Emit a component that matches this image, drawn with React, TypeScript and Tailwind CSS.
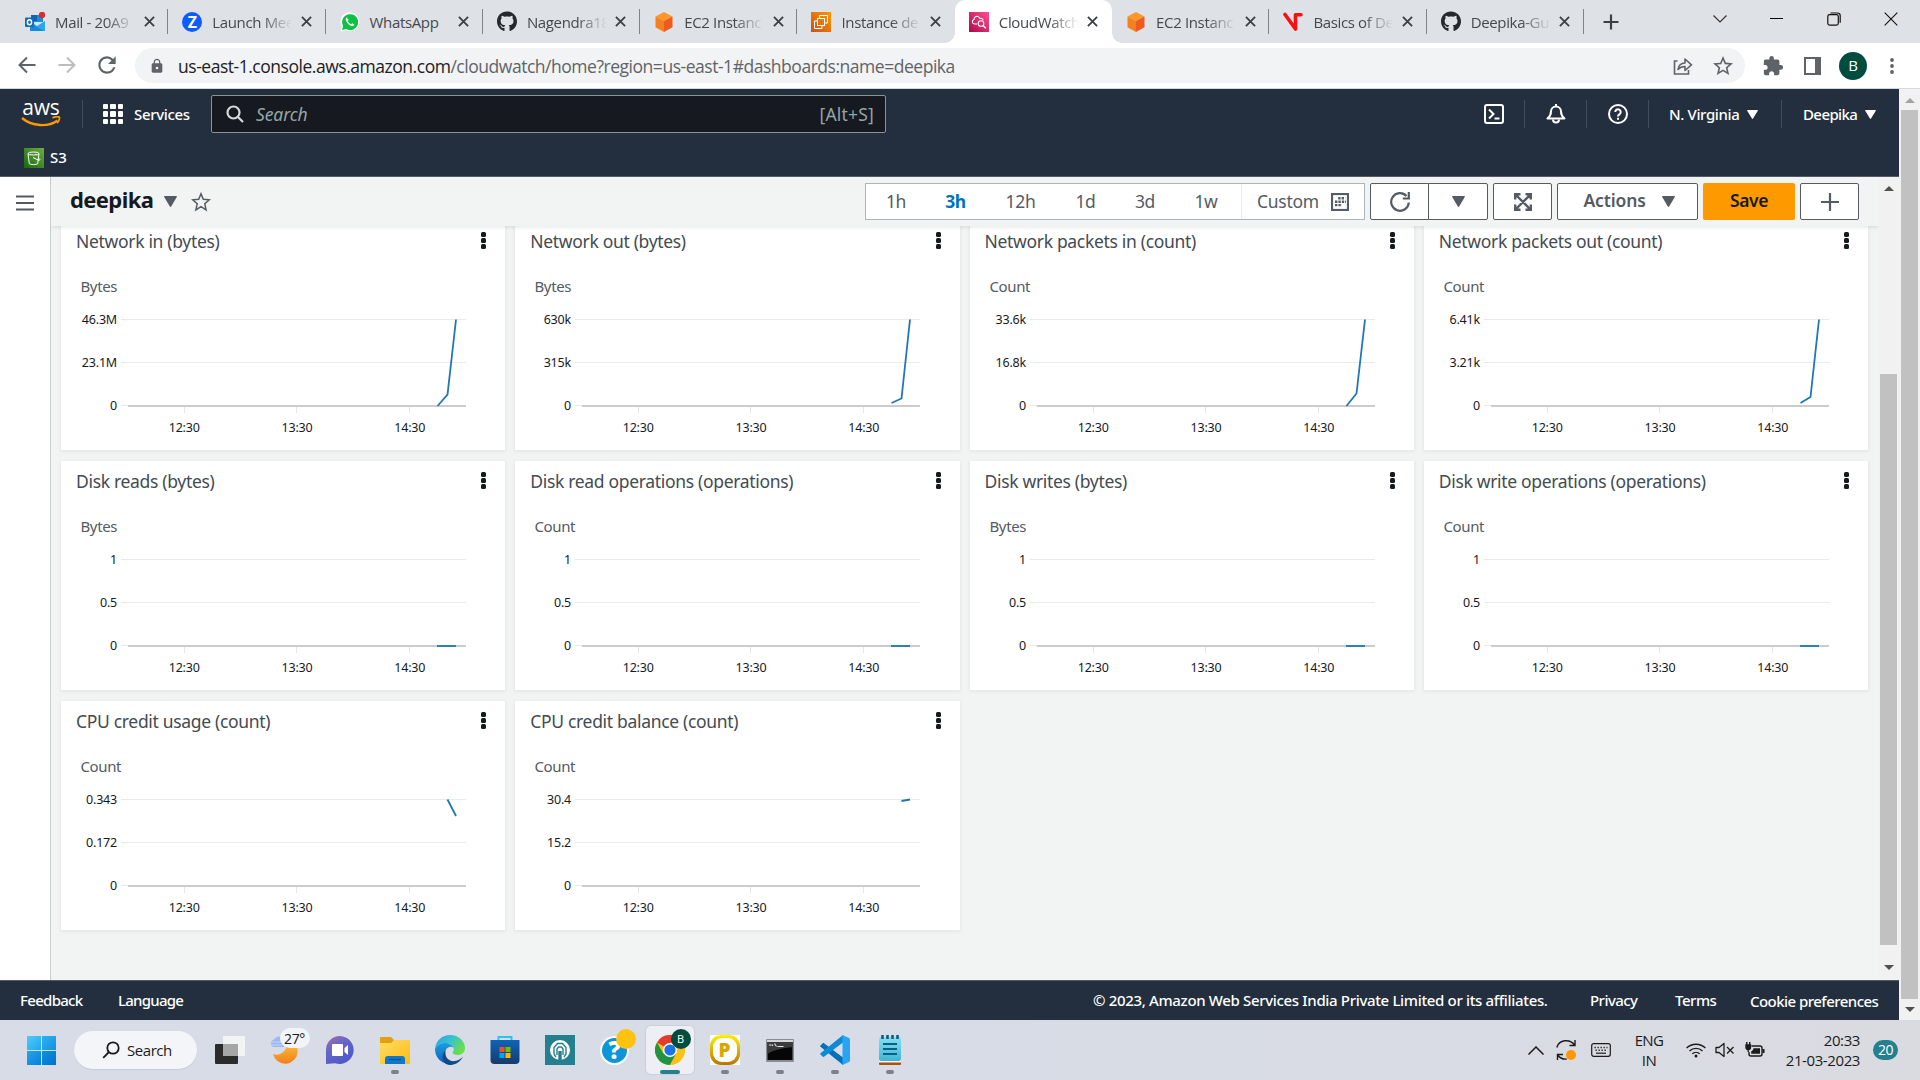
import React, { ReactNode } from "react";
import { FaGithub } from "react-icons/fa";
import { MdExtension, MdLock, MdRefresh, MdStarOutline } from "react-icons/md";

/* ---------- favicons ---------- */

const OutlookIcon = () => (
  <svg viewBox="0 0 20 20" className="size-5">
    <path d="M6 3h12v7H6z" fill="#1490df" />
    <path d="M6 3h6v6H6z" fill="#0f64b4" />
    <path d="M5 9l7 5 8-5v10H5z" fill="#28a8ea" />
    <path d="M5 11l14 8H6a1 1 0 0 1-1-1z" fill="#1a8ad8" />
    <rect x="0" y="5.5" width="9" height="9.5" rx="1" fill="#0f6cbd" />
    <ellipse cx="4.5" cy="10.2" rx="2.1" ry="2.5" fill="none" stroke="#fff" strokeWidth="1.4" />
    <circle cx="17" cy="3" r="3.2" fill="#e02b2b" />
  </svg>
);

const ZoomIcon = () => (
  <span className="flex size-5 items-center justify-center rounded-full bg-[#0b5cff] text-[16px] leading-none font-bold text-white">
    Z
  </span>
);

const WhatsAppIcon = () => (
  <svg viewBox="0 0 20 20" className="size-5">
    <path d="M0.5 19.5l1.4-5A9.4 9.4 0 1 1 5.6 18z" fill="#fff" />
    <path d="M2 18l1.1-4A8 8 0 1 1 6 17z" fill="#0dc143" />
    <path
      d="M6.8 5.5c-.9.3-1.3 1.3-1 2.5.7 2.8 3.2 5.3 6 6 1.2.3 2.3-.4 2.6-1.4l-2.2-1.3-1.1 1c-1.5-.6-2.7-1.8-3.3-3.3l.9-1.1z"
      fill="#fff"
    />
  </svg>
);

const Ec2CubeIcon = () => (
  <svg viewBox="0 0 20 20" className="size-5">
    <path d="M10 0l8.5 4.5L10 9 1.5 4.5z" fill="#fd9827" />
    <path d="M1.5 4.5L10 9v11l-8.5-4.7z" fill="#f58020" />
    <path d="M18.5 4.5L10 9v11l8.5-4.7z" fill="#ee5b1d" />
  </svg>
);

const Ec2SquareIcon = () => (
  <svg viewBox="0 0 20 20" className="size-5">
    <defs>
      <linearGradient id="ec2sq" x1="0" y1="1" x2="1" y2="0">
        <stop offset="0" stopColor="#c8511b" />
        <stop offset="1" stopColor="#f90" />
      </linearGradient>
    </defs>
    <rect width="20" height="20" fill="url(#ec2sq)" />
    <g fill="none" stroke="#fff" strokeWidth="1">
      <path d="M8.500 6V3.500h8V11H14" />
      <rect x="6.500" y="6.500" width="7" height="7" />
      <path d="M6 9H3.500v7.500H11V14" />
    </g>
  </svg>
);

const CloudWatchIcon = () => (
  <svg viewBox="0 0 20 20" className="size-5">
    <defs>
      <linearGradient id="cw" x1="0" y1="1" x2="1" y2="0">
        <stop offset="0" stopColor="#b0084d" />
        <stop offset="1" stopColor="#ff4f8b" />
      </linearGradient>
    </defs>
    <rect width="20" height="20" fill="url(#cw)" />
    <g fill="none" stroke="#fff" strokeWidth="1.1">
      <path d="M8 12H5.500a2.300 2.300 0 0 1-.5-4.500C5 5 7 4 8.800 4.500c1.200.3 1.800 1.200 2.200 2 1.700-.6 3 .3 3 1.700" />
      <circle cx="12" cy="11.500" r="2.800" />
      <path d="M14 13.500l2.800 2.800" strokeWidth="1.5" />
    </g>
  </svg>
);

const VIcon = () => (
  <svg viewBox="0 0 20 20" className="size-5">
    <path d="M2 2.500L12.500 17V2.800H18" fill="none" stroke="#fa0f0f" strokeWidth="3.600" strokeLinecap="round" strokeLinejoin="round" />
  </svg>
);

const GithubIcon = () => <FaGithub className="size-[21px] text-[#24292f]" />;

/* ---------- browser chrome ---------- */

type Tab = { title: string; icon: ReactNode; fade?: boolean; active?: boolean; line?: boolean };

const tabs: Tab[] = [
  { title: "Mail - 20A9", icon: <OutlookIcon />, fade: true, line: true },
  { title: "Launch Mee", icon: <ZoomIcon />, fade: true, line: true },
  { title: "WhatsApp", icon: <WhatsAppIcon />, line: true },
  { title: "Nagendra18", icon: <GithubIcon />, fade: true, line: true },
  { title: "EC2 Instanc", icon: <Ec2CubeIcon />, fade: true, line: true },
  { title: "Instance de", icon: <Ec2SquareIcon />, fade: true },
  { title: "CloudWatch", icon: <CloudWatchIcon />, fade: true, active: true },
  { title: "EC2 Instanc", icon: <Ec2CubeIcon />, fade: true, line: true },
  { title: "Basics of De", icon: <VIcon />, fade: true, line: true },
  { title: "Deepika-Gu", icon: <GithubIcon />, fade: true, line: true },
];

const TabItem = ({ title, icon, fade, active, line }: Tab) => (
  <div className={"relative flex h-[43px] w-[157.3px] shrink-0 items-center pr-[13px] pl-[14px] " + (active ? "rounded-t-[10px] bg-white" : "")}>
    {active && (
      <>
        <span className="absolute bottom-0 -left-[10px] size-[10px] bg-[radial-gradient(circle_at_0_0,transparent_9.5px,white_10px)]" />
        <span className="absolute -right-[10px] bottom-0 size-[10px] bg-[radial-gradient(circle_at_100%_0,transparent_9.5px,white_10px)]" />
      </>
    )}
    <span className="flex w-5 shrink-0 justify-center">{icon}</span>
    <span
      className={
        "ml-[10px] w-[88px] shrink-0 text-[15px] leading-5 tracking-[-0.35px] whitespace-nowrap text-[#45494d] " +
        (fade ? "[mask-image:linear-gradient(to_right,black_50px,transparent_80px)]" : "")
      }
    >
      {title}
    </span>
    <svg viewBox="0 0 12 12" className="ml-[0.5px] size-[11px] shrink-0">
      <path d="M1 1l10 10M11 1L1 11" stroke="#3c4043" strokeWidth="2" />
    </svg>
    {line && <span className="absolute top-[9px] right-0 h-[25px] w-px bg-[#808387]" />}
  </div>
);

const TabStrip = () => (
  <div className="flex h-[43px] bg-[#dee1e6] pr-px pl-[11px]">
    {tabs.map((t, i) => (
      <TabItem key={i} {...t} />
    ))}
    <div className="ml-[19px] flex w-4 items-center">
      <svg viewBox="0 0 16 16" className="size-4">
        <path d="M8 .5v15M.5 8h15" stroke="#3c4043" strokeWidth="2.2" />
      </svg>
    </div>
    <div className="ml-auto flex h-[37px] items-center">
      <div className="flex w-[57px] justify-center">
        <svg viewBox="0 0 14 8" className="h-2 w-[14px]">
          <path d="M.5.5L7 7 13.500.5" fill="none" stroke="#333" strokeWidth="1.2" />
        </svg>
      </div>
      <div className="flex w-[57px] justify-center">
        <span className="h-px w-[13px] bg-black" />
      </div>
      <div className="flex w-[57px] justify-center">
        <svg viewBox="0 0 14 14" className="size-[14px]" fill="none" stroke="#111" strokeWidth="1.2">
          <rect x=".8" y="2.600" width="10.500" height="10.500" rx="1.800" />
          <path d="M3.500 1h7A2.700 2.700 0 0 1 13.200 3.700v7" />
        </svg>
      </div>
      <div className="flex w-[57px] justify-center">
        <svg viewBox="0 0 14 14" className="size-[14px]">
          <path d="M.7.7l12.600 12.600M13.300.7L.7 13.300" stroke="#111" strokeWidth="1.1" />
        </svg>
      </div>
    </div>
  </div>
);

const AddressBar = () => (
  <div className="flex h-[46px] items-center border-b border-[#d5d8dc] bg-white">
    <div className="flex w-[135px] items-center pb-[2px] pl-[18px]">
      <svg viewBox="0 0 18 18" className="size-[18px]" fill="none" stroke="#5f6368" strokeWidth="2">
        <path d="M17.500 9H2M9 1.500L1.500 9 9 16.500" />
      </svg>
      <svg viewBox="0 0 18 18" className="ml-[22px] size-[18px]" fill="none" stroke="#bcbec1" strokeWidth="2">
        <path d="M.5 9H16M9 1.500L16.500 9 9 16.500" />
      </svg>
      <MdRefresh className="ml-[18px] size-[26px] text-[#5f6368]" />
    </div>
    <div className="flex h-[35px] w-[1610px] items-center rounded-full bg-[#f1f3f4] pr-[10px]">
      <MdLock className="ml-[14px] size-[16px] text-[#5f6368]" />
      <div className="ml-[13px] text-[17.5px] leading-6 tracking-[-0.47px] whitespace-nowrap text-[#5f6368]">
        <span className="text-[#202124]">us-east-1.console.aws.amazon.com</span>
        /cloudwatch/home?region=us-east-1#dashboards:name=deepika
      </div>
      <svg viewBox="0 0 20 20" className="ml-auto size-5" fill="none" stroke="#5f6368" strokeWidth="1.6">
        <path d="M4.500 5H1.500v13h14v-4" />
        <path d="M5 13.500c.5-4 3-6.300 7-6.500V3l6.500 5.800-6.500 5.700v-4c-3 0-5.300.9-7 3z" strokeLinejoin="round" />
      </svg>
      <MdStarOutline className="ml-[18px] size-6 text-[#5f6368]" />
    </div>
    <MdExtension className="ml-[17px] size-[22px] text-[#5f6368]" />
    <div className="ml-[20px] h-[18px] w-[17px] border-2 border-r-[6px] border-[#5f6368]" />
    <div className="ml-[18px] flex size-7 items-center justify-center rounded-full bg-[#004d40] text-[15px] text-white">B</div>
    <svg viewBox="0 0 4 16" className="ml-[23px] h-4 w-1" fill="#5f6368">
      <circle cx="2" cy="2" r="1.900" />
      <circle cx="2" cy="8" r="1.900" />
      <circle cx="2" cy="14" r="1.900" />
    </svg>
  </div>
);

/* ---------- AWS navigation ---------- */

const NavLine = () => <span className="block h-7 w-px bg-[#414d5c]" />;

const Caret = ({ className }: { className: string }) => (
  <svg viewBox="0 0 12 10" preserveAspectRatio="none" className={className} fill="currentColor">
    <path d="M.6 0h10.800c.5 0 .7.500.4.900L6.600 9.500c-.3.600-.9.600-1.200 0L.2.900C-.1.500.1 0 .6 0z" />
  </svg>
);

const AwsNav = () => (
  <header className="h-[88px] border-b border-[#545b64] bg-[#232f3e] font-['Noto_Sans',sans-serif] text-white">
    <div className="flex h-[50px] items-center">
      <div className="mr-[21px] ml-[21px] flex w-10 flex-col items-center">
        <span className="-mt-[4px] font-['Open_Sans',sans-serif] text-[21px] leading-[19px] font-medium tracking-[-0.2px]">aws</span>
        <svg viewBox="0 0 40 11" className="-mt-px h-[11px] w-10" fill="none" stroke="#f90">
          <path d="M1 2c10 8.500 26 9.500 35.500 2.500" strokeWidth="2.4" />
          <path d="M31.500 1.800c3-1.300 6-1.300 6.800-.6.500 1.200-.5 4-2.300 6" strokeWidth="1.8" />
        </svg>
      </div>
      <NavLine />
      <div className="ml-[20px] grid size-5 grid-cols-3 gap-[2px]">
        {Array.from({ length: 9 }, (_, i) => (
          <span key={i} className="rounded-[1px] bg-white" />
        ))}
      </div>
      <span className="ml-[11px] w-[77px] text-[15px] leading-5 font-medium tracking-[-0.34px]">Services</span>
      <div className="flex h-[38px] w-[675px] items-center rounded-[2px] border border-[#879596] bg-[#16191f] pr-[11px] pl-[14px]">
        <svg viewBox="0 0 18 18" className="size-[18px]" fill="none" stroke="#d5dbdb" strokeWidth="2.2">
          <circle cx="7.500" cy="7.500" r="6" />
          <path d="M12 12l5 5" />
        </svg>
        <span className="ml-[12px] text-[17.5px] leading-6 tracking-[-0.1px] text-[#95a5a6] italic">Search</span>
        <span className="ml-auto text-[17.5px] leading-6 tracking-[0.2px] text-[#95a5a6]">[Alt+S]</span>
      </div>
      <div className="ml-auto flex items-center">
        <svg viewBox="0 0 20 20" className="mr-[20px] size-5" fill="none" stroke="#fff" strokeWidth="2">
          <rect x="1" y="1" width="18" height="18" rx="2" />
          <path d="M5 5.500L9.500 10 5 14.500M10.500 14.500h5" />
        </svg>
        <NavLine />
        <svg viewBox="0 0 20 20" className="mr-[20px] ml-[21px] size-5" fill="none" stroke="#fff" strokeWidth="2">
          <path d="M1.500 14.500c2.500-2 3.500-4 3.500-7a5 5 0 0 1 10 0c0 3 1 5 3.500 7z" strokeLinejoin="round" />
          <path d="M7 15.500a3 3 0 0 0 6 0M10 0v2.500" />
        </svg>
        <NavLine />
        <svg viewBox="0 0 20 20" className="mr-[20px] ml-[21px] size-5" fill="none" stroke="#fff" strokeWidth="2">
          <circle cx="10" cy="10" r="9" />
          <path d="M7.300 8a2.700 2.700 0 1 1 4.300 2.200c-1 .7-1.600 1-1.600 2.300M10 13.800v2" />
        </svg>
        <span className="flex h-7 w-[133px] items-center border-l border-[#414d5c] pl-[20px] text-[15px] font-medium tracking-[-0.36px]">
          <span className="w-[71px] whitespace-nowrap">N. Virginia</span>
          <Caret className="ml-[7px] h-[9px] w-[11px]" />
        </span>
        <span className="flex h-7 w-[118px] items-center border-l border-[#414d5c] pl-[21px] text-[15px] font-medium tracking-[-0.6px]">
          <span className="w-[55px] whitespace-nowrap">Deepika</span>
          <Caret className="ml-[7px] h-[9px] w-[11px]" />
        </span>
      </div>
    </div>
    <div className="flex h-[37px] items-center pl-[24px]">
      <svg viewBox="0 0 20 20" className="size-5">
        <defs>
          <linearGradient id="s3" x1="0" y1="1" x2="1" y2="0">
            <stop offset="0" stopColor="#1b660f" />
            <stop offset="1" stopColor="#6cae3e" />
          </linearGradient>
        </defs>
        <rect width="20" height="20" fill="url(#s3)" />
        <g fill="none" stroke="#fff" strokeWidth="1">
          <ellipse cx="9.500" cy="5.500" rx="5.500" ry="1.500" />
          <path d="M4 5.500l1.300 10.200c1.500 1.200 7 1.200 8.400 0L15 5.500M9 9.500l5 2.500c2.500.8 2.500-.6.500-2" />
        </g>
      </svg>
      <span className="ml-[6px] text-[15px] font-medium">S3</span>
    </div>
  </header>
);

/* ---------- dashboard ---------- */

const ranges = [
  { label: "1h", width: "w-[60px]" },
  { label: "3h", width: "w-[59px]", selected: true },
  { label: "12h", width: "w-[71px]" },
  { label: "1d", width: "w-[59px]" },
  { label: "3d", width: "w-[60px]" },
  { label: "1w", width: "w-[66px] pr-[4px]" },
];

const btn = "flex h-[37px] items-center justify-center border border-[#545b64] bg-white text-[#545b64]";

const DashboardHeader = () => (
  <div className="relative z-10 flex h-[49px] items-center bg-[#f2f3f3] pr-[20px] pl-[19px] shadow-[0_1px_4px_rgba(0,28,36,0.12)]">
    <h1 className="w-[84px] pb-[5px] text-[22px] leading-7 font-bold tracking-[-0.6px] text-[#16191f]">deepika</h1>
    <Caret className="ml-[10px] h-[11px] w-[13px] text-[#545b64]" />
    <svg viewBox="0 0 20 20" className="ml-[14px] size-5" fill="none" stroke="#545b64" strokeWidth="1.5">
      <path d="M10 1.800l2.300 5.500 6 .5-4.500 4 1.300 6L10 14.600l-5.100 3.200 1.300-6-4.500-4 6-.5z" />
    </svg>
    <div className="ml-auto flex items-center">
      <div className="flex h-[37px] w-[500px] items-center border border-[#aab7b8] bg-white text-[17.5px] text-[#545b64]">
        {ranges.map((r) => (
          <span
            key={r.label}
            className={r.width + " text-center tracking-[-0.35px] " + (r.selected ? "font-bold text-[#0073bb]" : "")}
          >
            {r.label}
          </span>
        ))}
        <span className="flex h-[35px] items-center border-l border-[#eaeded] pl-[15px] tracking-[-0.28px]">
          <span className="w-[62px]">Custom</span>
          <svg viewBox="0 0 18 18" className="ml-[12px] size-[18px]">
            <rect x="1" y="1" width="16" height="16" fill="#fff" stroke="#545b64" strokeWidth="2.2" />
            <path d="M7.200 5.300h7M4 8.700h11M4 12.100h7" stroke="#545b64" strokeWidth="2.400" strokeDasharray="2.400 1" />
          </svg>
        </span>
      </div>
      <div className={btn + " ml-[5px] w-[59px] rounded-l-[2px]"}>
        <svg viewBox="0 0 20 20" className="size-5" fill="none" stroke="#545b64" strokeWidth="2.2">
          <path d="M18.800 10.500A8.800 8.800 0 1 1 16.500 4M18.800 0v6.500h-6" />
        </svg>
      </div>
      <div className={btn + " -ml-px w-[60px] rounded-r-[2px]"}>
        <Caret className="h-[11px] w-[13px]" />
      </div>
      <div className={btn + " ml-[5px] w-[59px] rounded-[2px]"}>
        <svg viewBox="0 0 18 18" className="size-[18px]" fill="none" stroke="#545b64" strokeWidth="2.4">
          <path d="M1.200 6.500V1.200H6.500M11.500 1.200h5.300V6.500M16.800 11.500v5.300H11.500M6.500 16.800H1.200V11.500M2 2l14 14M16 2L2 16" />
        </svg>
      </div>
      <div className={btn + " ml-[5px] w-[141px] rounded-[2px] text-[17.5px] font-semibold tracking-[-0.15px]"}>
        <span className="ml-[3px] w-[64px] pb-[2px]">Actions</span>
        <Caret className="ml-[14px] h-[11px] w-[13px]" />
      </div>
      <div className="ml-[5px] flex h-[37px] w-[92px] items-center justify-center rounded-[2px] bg-[#ff9900] pb-[2px] text-[17.5px] font-semibold tracking-[-0.4px] text-[#16191f]">
        Save
      </div>
      <div className={btn + " ml-[5px] w-[59px] rounded-[2px]"}>
        <svg viewBox="0 0 18 18" className="size-[18px]">
          <path d="M9 0v18M0 9h18" stroke="#545b64" strokeWidth="2.2" />
        </svg>
      </div>
    </div>
  </div>
);

type Metric = { title: string; unit: string; ticks: [string, string, string]; points: string };

const flat = "376,185 395,185";

const metrics: Metric[] = [
  { title: "Network in (bytes)", unit: "Bytes", ticks: ["46.3M", "23.1M", "0"], points: "376.5,185 386.5,173.5 395,98.5" },
  { title: "Network out (bytes)", unit: "Bytes", ticks: ["630k", "315k", "0"], points: "376.5,182 386.5,177.5 395,98.5" },
  { title: "Network packets in (count)", unit: "Count", ticks: ["33.6k", "16.8k", "0"], points: "376.5,185 386.5,172.5 395,98.5" },
  { title: "Network packets out (count)", unit: "Count", ticks: ["6.41k", "3.21k", "0"], points: "376.5,182 386.5,176 395,98.5" },
  { title: "Disk reads (bytes)", unit: "Bytes", ticks: ["1", "0.5", "0"], points: flat },
  { title: "Disk read operations (operations)", unit: "Count", ticks: ["1", "0.5", "0"], points: flat },
  { title: "Disk writes (bytes)", unit: "Bytes", ticks: ["1", "0.5", "0"], points: flat },
  { title: "Disk write operations (operations)", unit: "Count", ticks: ["1", "0.5", "0"], points: flat },
  { title: "CPU credit usage (count)", unit: "Count", ticks: ["0.343", "0.172", "0"], points: "386.5,98.5 395,115" },
  { title: "CPU credit balance (count)", unit: "Count", ticks: ["30.4", "15.2", "0"], points: "386.5,100 395,98.5" },
];

const Chart = ({ unit, ticks, points }: Metric) => (
  <svg viewBox="0 40 444 189" className="block h-[189px] w-[444px]">
    <text x="19.500" y="71" className="fill-[#545b64] text-[15px] tracking-[-0.38px]">{unit}</text>
    {ticks.map((t, i) => (
      <text key={i} x="56" y={103 + i * 43} textAnchor="end" className="fill-[#16191f] text-[12.5px] tracking-[-0.2px]">
        {t}
      </text>
    ))}
    <path d="M60 98.500h345M60 141.500h345M60 184.500h8" stroke="#eaeaea" />
    <path d="M123.500 186v6M235.500 186v6M348.500 186v6" stroke="#e4e6e6" />
    <path d="M67 185h338" stroke="#cccccc" strokeWidth="2" />
    {["12:30", "13:30", "14:30"].map((t, i) => (
      <text key={t} x={123.2 + i * 112.8} y="211" textAnchor="middle" className="fill-[#16191f] text-[12.5px] tracking-[-0.19px]">
        {t}
      </text>
    ))}
    <polyline points={points} fill="none" stroke="#1f77b4" strokeWidth="1.800" />
  </svg>
);

const MetricCard = (m: Metric) => (
  <section className="h-[229px] bg-white shadow-[0_1px_3px_1px_rgba(0,28,36,0.05)]">
    <div className="flex h-10 items-start justify-between pt-[8px] pr-[19px] pl-[15px]">
      <h2 className="text-[17.5px] leading-6 tracking-[-0.32px] text-[#444b52]">{m.title}</h2>
      <div className="mt-[3px] flex flex-col gap-[1px]">
        {[0, 1, 2].map((i) => (
          <span key={i} className="size-[5px] rounded-[1.5px] bg-[#16191f]" />
        ))}
      </div>
    </div>
    <Chart {...m} />
  </section>
);

const ScrollArrow = ({ up, className }: { up?: boolean; className: string }) => (
  <svg viewBox="0 0 10 5" className={"h-[5px] w-[10px] " + className} fill="currentColor">
    <path d={up ? "M5 0l5 5H0z" : "M0 0h10L5 5z"} />
  </svg>
);

const Workspace = () => (
  <div className="flex h-[803px] bg-[#f2f3f3] font-['Noto_Sans',sans-serif]">
    <aside className="w-[51px] border-r border-[#c5cccc] bg-white pt-[18px] pl-4">
      <svg viewBox="0 0 18 16" className="h-4 w-[18px]">
        <path d="M0 1.500h18M0 8h18M0 14.500h18" stroke="#545b64" strokeWidth="2" />
      </svg>
    </aside>
    <main className="flex w-[1828px] flex-col overflow-hidden">
      <DashboardHeader />
      <div className="flex-1 overflow-hidden">
        <div className="-mt-[5px] ml-[10px] grid w-[1807px] grid-cols-4 gap-x-[10px] gap-y-[11px]">
          {metrics.map((m) => (
            <MetricCard key={m.title} {...m} />
          ))}
        </div>
      </div>
    </main>
    <div className="flex w-5 flex-col items-center bg-[#f1f1f1] pr-px">
      <ScrollArrow up className="mt-[9px] text-[#505050]" />
      <div className="mt-[183px] h-[571px] w-[17px] bg-[#c1c1c1]" />
      <ScrollArrow className="mt-[20px] text-[#505050]" />
    </div>
  </div>
);

const Footer = () => (
  <footer className="flex h-10 items-center border-t border-[#545b64] bg-[#232f3e] pl-[20px] font-['Noto_Sans',sans-serif] text-[15px] font-medium whitespace-nowrap text-white">
    <span className="w-[98px] tracking-[-0.7px]">Feedback</span>
    <span className="tracking-[-0.75px]">Language</span>
    <span className="ml-auto w-[497px] tracking-[-0.34px]">© 2023, Amazon Web Services India Private Limited or its affiliates.</span>
    <span className="w-[85px] tracking-[-0.55px]">Privacy</span>
    <span className="w-[75px] tracking-[-0.48px]">Terms</span>
    <span className="w-[149px] pt-[2px] tracking-[-0.54px]">Cookie preferences</span>
  </footer>
);

/* ---------- taskbar ---------- */

const TaskSlot = ({ children, mark, active }: { children: ReactNode; mark?: boolean; active?: boolean }) => (
  <div className="flex h-[60px] w-[55px] items-center justify-center">
    <div
      className={
        "relative flex size-12 items-center justify-center rounded-[5px] " +
        (active ? "bg-[#edeff4] shadow-[0_0_1px_1px_rgba(0,0,0,0.06)]" : "")
      }
    >
      {children}
      {mark && <span className="absolute bottom-0 left-5 h-1 w-2 rounded-full bg-[#7d8087]" />}
      {active && <span className="absolute bottom-0 left-[14px] h-1 w-5 rounded-full bg-[#24808f]" />}
    </div>
  </div>
);

const TaskView = () => (
  <svg viewBox="0 0 30 30" className="size-[30px]">
    <rect x="0" y="9" width="23" height="20" rx="1" fill="#2b2b2b" />
    <rect x="8" y="1" width="22" height="20" rx="1" fill="#f3f3f3" fillOpacity=".95" />
    <rect x="8" y="9" width="15" height="12" fill="#a6a6a6" />
  </svg>
);

const Weather = () => (
  <>
    <svg viewBox="0 0 30 30" className="size-[30px]">
      <defs>
        <linearGradient id="moon" x1="0" y1="0" x2="0" y2="1">
          <stop offset="0" stopColor="#ffc83d" />
          <stop offset="1" stopColor="#f0801e" />
        </linearGradient>
      </defs>
      <path d="M18 4a12.500 12.500 0 1 1-15 15C10 22 19 15 18 4z" fill="url(#moon)" />
      <path d="M3 12a4 4 0 0 1 1-7.500A6 6 0 0 1 14 4v8z" fill="#9db9ee" />
      <path d="M1 7h10M0 10h12" stroke="#c5d6f7" strokeWidth="1.2" />
    </svg>
    <span className="absolute top-[2px] left-[19px] flex h-5 w-[30px] items-center justify-center rounded-full bg-[#f3f4f7] text-[14px] tracking-[-0.4px] text-[#1a1a1a]">
      27°
    </span>
  </>
);

const Chat = () => (
  <svg viewBox="0 0 30 30" className="size-[30px]">
    <defs>
      <linearGradient id="chat" x1="0" y1="0" x2=".6" y2="1">
        <stop offset="0" stopColor="#a06cb0" />
        <stop offset=".5" stopColor="#6264c7" />
        <stop offset="1" stopColor="#5059c9" />
      </linearGradient>
    </defs>
    <path d="M15 1a14 14 0 1 1-5 27.200L1 29V15A14 14 0 0 1 15 1z" fill="url(#chat)" />
    <rect x="7" y="9" width="11" height="12" rx="1" fill="#fff" />
    <path d="M19.500 13l3.500-3v10l-3.500-3z" fill="#fff" />
  </svg>
);

const Folder = () => (
  <svg viewBox="0 0 30 30" className="size-[30px]">
    <defs>
      <linearGradient id="folder" x1="0" y1="0" x2="1" y2="1">
        <stop offset="0" stopColor="#ffdc67" />
        <stop offset="1" stopColor="#fdbc12" />
      </linearGradient>
    </defs>
    <path d="M0 3a1 1 0 0 1 1-1h10l3 3h15v5H0z" fill="#e0a010" />
    <path d="M0 8h11l3-3h15a1 1 0 0 1 1 1v22a1 1 0 0 1-1 1H0z" fill="url(#folder)" />
    <path d="M5 29v-5a3 3 0 0 1 3-3h14a3 3 0 0 1 3 3v5z" fill="#0f78c8" />
    <path d="M9 24.500h12" stroke="#0a4f91" strokeWidth="1.2" />
  </svg>
);

const Edge = () => (
  <svg viewBox="0 0 30 30" className="size-[30px]">
    <defs>
      <linearGradient id="edgeTop" x1="0" y1="0" x2="1" y2=".5">
        <stop offset="0" stopColor="#2aa5dd" />
        <stop offset=".5" stopColor="#35c1d0" />
        <stop offset="1" stopColor="#6ade4d" />
      </linearGradient>
      <linearGradient id="edgeLow" x1="0" y1="0" x2="0" y2="1">
        <stop offset="0" stopColor="#1c9de0" />
        <stop offset="1" stopColor="#0c5fb8" />
      </linearGradient>
    </defs>
    <path d="M0 14C1 5 7.500 0 15 0c9 0 15 6.500 15 13 0 4.500-3.500 7-7.500 7-3 0-5-1-5-2.200 0-.8 1.300-1.300 1.300-3.600C18.800 11 15.500 8 10.500 8 5 8 1.500 10.500 0 14z" fill="url(#edgeTop)" />
    <path d="M0 14C1.500 10.500 5 8 10.500 8c4.500 0 7 2.500 7.800 4.500-3-2-8 0-8 5.500 0 6 5 10 11 9.800A15 15 0 0 1 0 15z" fill="url(#edgeLow)" />
    <path d="M10.500 15.500C9 22 14 27 20 26c3-.5 6-2 8-4.500C25 28 19 30 15 30c-5 0-8-5-7.500-9 .3-2.500 1.500-4.500 3-5.500z" fill="#114a8b" />
  </svg>
);

const Store = () => (
  <svg viewBox="0 0 30 30" className="size-[30px]">
    <defs>
      <linearGradient id="store" x1="0" y1="0" x2="0" y2="1">
        <stop offset="0" stopColor="#0c66b8" />
        <stop offset="1" stopColor="#173a6b" />
      </linearGradient>
    </defs>
    <path d="M8.500 6V2h13v4" fill="none" stroke="#2cc3f2" strokeWidth="2" />
    <path d="M.5 5h29v20a4 4 0 0 1-4 4h-21a4 4 0 0 1-4-4z" fill="url(#store)" />
    <path d="M9.500 12h5v5h-5z" fill="#f25022" />
    <path d="M15.500 12h5v5h-5z" fill="#7fba00" />
    <path d="M9.500 18h5v5h-5z" fill="#00a4ef" />
    <path d="M15.500 18h5v5h-5z" fill="#ffb900" />
  </svg>
);

const TealApp = () => (
  <svg viewBox="0 0 30 30" className="size-[30px]">
    <rect width="30" height="30" fill="#24808f" />
    <circle cx="15" cy="15" r="10" fill="#fff" />
    <path d="M9 19v-6.500l3.500-4h5l3.500 4V19l-2 3M9 19l2 3M12 20v-6l1.500-2h3l1.500 2v6" fill="none" stroke="#24808f" strokeWidth="1.400" />
    <path d="M13.300 16h3.400v9.500h-3.400z" fill="#24808f" />
  </svg>
);

const HelpApp = () => (
  <>
    <span className="flex size-[29px] items-center justify-center rounded-full border-2 border-white bg-[#0a96d8] text-[24px] leading-none font-extrabold text-white">
      ?
    </span>
    <span className="absolute top-[3px] right-[3px] size-5 rounded-full bg-[#ffc20e]" />
  </>
);

const Chrome = () => (
  <>
    <svg viewBox="0 0 30 30" className="size-[30px]">
      <circle cx="15" cy="15" r="15" fill="#fbc116" />
      <path d="M15 15L2 7.500A15 15 0 0 1 28 7.500H15z" fill="#e33b2e" />
      <path d="M2 7.500A15 15 0 0 0 15 30l6.500-11.300L15 15l-6.500 3.700z" fill="#229342" />
      <path d="M15 8.200h13.200A15 15 0 0 1 15 30l6.200-11.500z" fill="#fbc116" />
      <circle cx="15" cy="15" r="7" fill="#fff" />
      <circle cx="15" cy="15" r="5.600" fill="#1a73e8" />
    </svg>
    <span className="absolute top-[3px] right-[3px] flex size-5 items-center justify-center rounded-full bg-[#004d40] text-[11px] text-white">B</span>
  </>
);

const PApp = () => (
  <span className="flex size-[30px] items-center justify-center bg-white">
    <span className="flex size-[30px] items-center justify-center rounded-[11px] bg-linear-to-b from-[#fff200] to-[#b87400] p-[3px]">
      <span className="flex size-full items-center justify-center rounded-[9px] bg-white text-[19px] leading-none font-extrabold text-[#d9a800]">P</span>
    </span>
  </span>
);

const Terminal = () => (
  <svg viewBox="0 0 28 23" className="h-[23px] w-7">
    <rect width="28" height="23" rx="1" fill="#8a8d92" />
    <rect x="1" y="1" width="26" height="2" fill="#d5d7da" />
    <rect x="1.500" y="3" width="25" height="18" fill="#060606" />
    <path d="M1.500 3h25v5c-10 1-19 3-25 7z" fill="#3c3c3c" />
    <path d="M3 6h2.500M6.500 5.500v1.500M8.500 4.500l2 3M11.500 7.500h6" stroke="#e5e5e5" strokeWidth="1.1" />
  </svg>
);

const VsCode = () => (
  <svg viewBox="0 0 30 30" className="size-[30px]">
    <path d="M.5 10.500l2-2c.5-.5 1.300-.5 1.800-.1L23 22.500V30L.5 11.800a.9.9 0 0 1 0-1.300z" fill="#0070bb" />
    <path d="M.5 19.500l2 2c.5.5 1.300.5 1.800.1L23 7.500V0L.5 18.200a.9.9 0 0 0 0 1.300z" fill="#1089d5" />
    <path d="M22.500 0L29 3a2 2 0 0 1 1 1.700v20.600a2 2 0 0 1-1 1.700l-6.500 3z" fill="#27a5f3" />
  </svg>
);

const Notepad = () => (
  <svg viewBox="0 0 24 30" className="h-[30px] w-6">
    <defs>
      <linearGradient id="note" x1="0" y1="0" x2="0" y2="1">
        <stop offset="0" stopColor="#86e0f0" />
        <stop offset="1" stopColor="#41b4d4" />
      </linearGradient>
    </defs>
    <rect x="1" y="25" width="22" height="5" rx="1" fill="#b04e0f" />
    <rect x="1" y="24" width="22" height="3.500" fill="#f4f4f4" />
    <rect x="1" y="2" width="22" height="24" rx="2" fill="url(#note)" />
    <path d="M5 9h14M5 14h14M5 19h14" stroke="#0c5f84" strokeWidth="1.800" />
    <path d="M4.500 0v4M9.500 0v4M14.500 0v4M19.500 0v4" stroke="#0c5f84" strokeWidth="2.600" />
  </svg>
);

const Taskbar = () => (
  <div className="flex h-[60px] items-center bg-linear-to-r from-[#d8dce6] via-[#d7dce6] to-[#dadbe1] text-[#1b1b1b]">
    <div className="ml-[27px] grid size-[29px] grid-cols-2 gap-px">
      <span className="bg-linear-to-br from-[#4ccbfb] to-[#22a5ee]" />
      <span className="bg-linear-to-br from-[#2db2f3] to-[#1290df]" />
      <span className="bg-linear-to-br from-[#22a5ee] to-[#0a7fd6]" />
      <span className="bg-linear-to-br from-[#1290df] to-[#0072cf]" />
    </div>
    <div className="ml-[18px] flex h-[38px] w-[123px] items-center rounded-full bg-[#f4f5f8] pl-[28px] shadow-[0_1px_1px_rgba(0,0,0,0.08)]">
      <svg viewBox="0 0 18 18" className="size-[18px]" fill="none" stroke="#1b1b1b" strokeWidth="1.800">
        <circle cx="11" cy="7" r="5.700" />
        <path d="M7 11L1.200 16.800" />
      </svg>
      <span className="ml-[7px] text-[15px] tracking-[-0.45px]">Search</span>
    </div>
    <div className="ml-[5px] flex">
      <TaskSlot><TaskView /></TaskSlot>
      <TaskSlot><Weather /></TaskSlot>
      <TaskSlot><Chat /></TaskSlot>
      <TaskSlot mark><Folder /></TaskSlot>
      <TaskSlot><Edge /></TaskSlot>
      <TaskSlot><Store /></TaskSlot>
      <TaskSlot><TealApp /></TaskSlot>
      <TaskSlot><HelpApp /></TaskSlot>
      <TaskSlot active><Chrome /></TaskSlot>
      <TaskSlot mark><PApp /></TaskSlot>
      <TaskSlot mark><Terminal /></TaskSlot>
      <TaskSlot mark><VsCode /></TaskSlot>
      <TaskSlot mark><Notepad /></TaskSlot>
    </div>
    <div className="mr-[22px] ml-auto flex items-center text-[15px] leading-5">
      <svg viewBox="0 0 16 9" className="h-[9px] w-4" fill="none" stroke="#1b1b1b" strokeWidth="1.5">
        <path d="M.5 8.500L8 1l7.500 7.500" />
      </svg>
      <span className="relative ml-[12px] size-5">
        <svg viewBox="0 0 20 20" className="size-5" fill="none" stroke="#1b1b1b" strokeWidth="1.400">
          <path d="M.8 7.500C3-.5 14-1.500 18.500 5M19 0v5.500h-5.500M1.500 20v-5.500H7M1.800 15c2 3 5.500 4.500 9 4" />
        </svg>
        <span className="absolute right-0 bottom-0 size-[10px] rounded-full bg-[#ff9800]" />
      </span>
      <svg viewBox="0 0 20 14" className="ml-[15px] h-[14px] w-5" fill="none" stroke="#1b1b1b" strokeWidth="1.2">
        <rect x=".7" y=".7" width="18.600" height="12.600" rx="2" />
        <path d="M3.500 4.500h13M4.500 7.200h11" strokeDasharray="1.300 1.700" strokeWidth="1.400" />
        <path d="M5 10.200h10" />
      </svg>
      <div className="ml-[22px] w-8 text-center tracking-[-0.6px]">
        <div>ENG</div>
        <div>IN</div>
      </div>
      <svg viewBox="0 0 20 16" className="ml-[21px] h-4 w-5" fill="none" stroke="#1b1b1b" strokeWidth="1.400">
        <path d="M.6 6A13.500 13.500 0 0 1 19.400 6M3.500 9a9.400 9.400 0 0 1 13 0M6.300 11.800a5.400 5.400 0 0 1 7.400 0" />
        <circle cx="10" cy="14" r="1.500" fill="#1b1b1b" stroke="none" />
      </svg>
      <svg viewBox="0 0 20 16" className="ml-[9px] h-4 w-5" fill="none" stroke="#1b1b1b" strokeWidth="1.300">
        <path d="M1 5.500h3L9 1.500v13l-5-4H1z" strokeLinejoin="round" />
        <path d="M12 5l6.500 6.500M18.500 5L12 11.500" />
      </svg>
      <svg viewBox="0 0 20 16" className="ml-[10px] h-4 w-5" fill="none" stroke="#1b1b1b" strokeWidth="1.400">
        <path d="M6.500 4H15a2 2 0 0 1 2 2v6a2 2 0 0 1-2 2H6a2 2 0 0 1-2-2v-2" />
        <path d="M18.500 7v4" strokeWidth="2" />
        <path d="M8.500 6.200H15v5.600H6.200V9.500a3.500 3.500 0 0 0 2.300-3.300z" fill="#1b1b1b" stroke="none" />
        <path d="M1 3h4.500v2.200a2.200 2.200 0 0 1-4.500 0zM1.800 0v3M4.700 0v3M3.200 7.500V10" fill="#1b1b1b" />
      </svg>
      <div className="w-[95px] text-right tracking-[-0.4px]">
        <div>20:33</div>
        <div>21-03-2023</div>
      </div>
      <span className="ml-[13px] flex h-5 w-[25px] items-center justify-center rounded-full bg-[#24808f] text-[14px] tracking-[-0.4px] text-white">20</span>
    </div>
  </div>
);

export default function App() {
  return (
    <div className="flex h-[1080px] w-[1920px] flex-col overflow-hidden bg-white font-['Open_Sans',sans-serif]">
      <TabStrip />
      <AddressBar />
      <div className="flex h-[931px]">
        <div className="w-[1899px]">
          <AwsNav />
          <Workspace />
          <Footer />
        </div>
        <div className="flex w-[21px] flex-col items-center bg-[#f1f1f1]">
          <ScrollArrow up className="mt-[9px] text-[#a3a3a3]" />
          <div className="mt-[7px] h-[889px] w-[17px] bg-[#c1c1c1]" />
          <ScrollArrow className="mt-[8px] text-[#505050]" />
        </div>
      </div>
      <Taskbar />
    </div>
  );
}
